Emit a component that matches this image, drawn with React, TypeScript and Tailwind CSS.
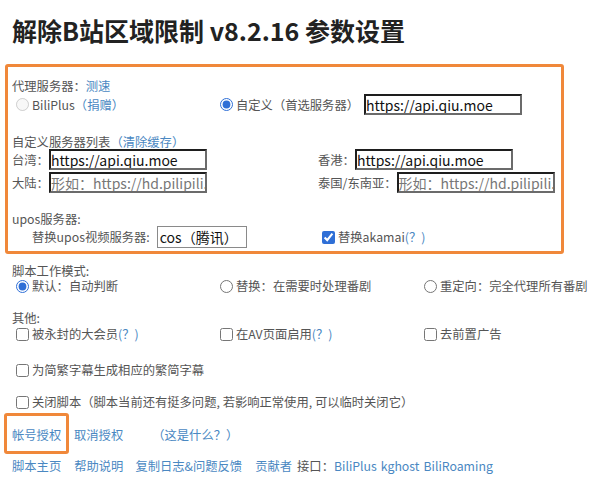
import React from 'react';

const font = { fontFamily: '"Noto Sans CJK SC", "Noto Sans", sans-serif' };

const Link: React.FC<{ children: React.ReactNode; className?: string }> = ({ children, className = '' }) => (
  <a href="#" className={`text-[#4a88c2] no-underline ${className}`}>
    {children}
  </a>
);

const Radio: React.FC<{ checked?: boolean; disabled?: boolean; name: string }> = ({ checked, disabled, name }) => (
  <input
    type="radio"
    name={name}
    defaultChecked={checked}
    disabled={disabled}
    className="m-0 ml-[4px] mr-[3px] w-[13px] h-[13px] shrink-0 accent-[#2f6fd6]"
  />
);

const Check: React.FC<{ checked?: boolean }> = ({ checked }) => (
  <input
    type="checkbox"
    defaultChecked={checked}
    className="m-0 ml-[4px] mr-[3px] w-[13px] h-[13px] shrink-0 accent-[#2f6fd6]"
  />
);

const TextBox: React.FC<{ value?: string; placeholder?: string }> = ({ value, placeholder }) => (
  <input
    type="text"
    defaultValue={value}
    placeholder={placeholder}
    className="w-[158px] h-[21px] px-0 border-2 border-t-[#1e1e1e] border-l-[#1e1e1e] border-r-[#6b6b6b] border-b-[#6b6b6b] bg-white text-[14px] leading-[17px] text-[#111] placeholder:text-[#777] outline-none"
  />
);

export default function App() {
  return (
    <div className="w-[600px] h-[486px] bg-white px-[5px] text-[12.3px] text-[#555] overflow-hidden" style={font}>
      <h1 className="pt-[14px] pl-[7px] text-[25px] leading-[32px] font-bold text-[#222]">
        解除B站区域限制 v8.2.16 参数设置
      </h1>

      <div className="mt-[18px] w-[559px] border-[3px] border-[#f0883a] rounded-[3px] pt-[12px] pb-[3px] pl-[4px]">
        <div className="leading-[15px]">
          代理服务器：<Link>测速</Link>
        </div>
        <div className="flex items-center h-[21px] leading-[14px]">
          <label className="w-[204px] flex items-center">
            <Radio name="proxy" disabled />
            BiliPlus<Link>（捐赠）</Link>
          </label>
          <label className="flex items-center">
            <Radio name="proxy" checked />
            自定义（首选服务器）
          </label>
          <div className="ml-[5px]">
            <TextBox value="https://api.qiu.moe" />
          </div>
        </div>

        <div className="mt-[20px] leading-[14px]">
          自定义服务器列表<Link>（清除缓存）</Link>
        </div>
        <div className="flex items-center h-[21px] leading-[14px]">
          <div className="w-[306px] flex items-center">
            <span>台湾：</span>
            <TextBox value="https://api.qiu.moe" />
          </div>
          <div className="flex items-center">
            <span>香港：</span>
            <TextBox value="https://api.qiu.moe" />
          </div>
        </div>
        <div className="mt-[2px] flex items-center h-[21px] leading-[14px]">
          <div className="w-[306px] flex items-center">
            <span>大陆：</span>
            <TextBox placeholder="形如：https://hd.pilipili.com" />
          </div>
          <div className="flex items-center">
            <span>泰国/东南亚：</span>
            <TextBox placeholder="形如：https://hd.pilipili.com" />
          </div>
        </div>

        <div className="mt-[19px] leading-[14px]">upos服务器:</div>
        <div className="flex items-center h-[22px] leading-[14px]">
          <div className="w-[306px] flex items-center pl-[20px]">
            <span>替换upos视频服务器:</span>
            <div className="ml-[7px] w-[90px] h-[22px] border border-[#8a8a8a] px-[2px] text-[14px] leading-[20px] text-[#111]">
              cos（腾讯）
            </div>
          </div>
          <label className="flex items-center">
            <Check checked />
            替换akamai<Link>(？)</Link>
          </label>
        </div>
      </div>

      <div className="pl-[7px]">
        <div className="mt-[11px] leading-[12px]">脚本工作模式:</div>
        <div className="mt-[1px] flex items-center h-[16px] leading-[14px]">
          <label className="w-[204px] flex items-center">
            <Radio name="mode" checked />
            默认：自动判断
          </label>
          <label className="w-[204px] flex items-center">
            <Radio name="mode" />
            替换：在需要时处理番剧
          </label>
          <label className="flex items-center">
            <Radio name="mode" />
            重定向：完全代理所有番剧
          </label>
        </div>

        <div className="mt-[17px] leading-[14px]">其他:</div>
        <div className="mt-[1px] flex items-center h-[16px] leading-[14px]">
          <label className="w-[204px] flex items-center">
            <Check />
            被永封的大会员<Link>(？)</Link>
          </label>
          <label className="w-[204px] flex items-center">
            <Check />
            在AV页面启用<Link>(？)</Link>
          </label>
          <label className="flex items-center">
            <Check />
            去前置广告
          </label>
        </div>
        <label className="mt-[20px] flex items-center h-[16px] leading-[14px]">
          <Check />
          为简繁字幕生成相应的繁简字幕
        </label>
        <label className="mt-[16px] flex items-center h-[16px] leading-[14px]">
          <Check />
          关闭脚本（脚本当前还有挺多问题, 若影响正常使用, 可以临时关闭它）
        </label>
      </div>

      <div className="mt-[3px] flex items-center h-[41px]">
        <div className="-ml-[1px] w-[65px] h-[41px] border-[3px] border-[#f0883a] rounded-[3px] flex items-center pl-[5px] pt-[4px]">
          <Link>帐号授权</Link>
        </div>
        <Link className="ml-[5px] pt-[4px]">取消授权</Link>
        <Link className="ml-[29px] pt-[4px]">（这是什么？）</Link>
      </div>

      <div className="mt-[4px] pl-[7px] flex items-center leading-[16px]">
        <Link>脚本主页</Link>
        <Link className="ml-[13px]">帮助说明</Link>
        <Link className="ml-[12px]">复制日志&amp;问题反馈</Link>
        <Link className="ml-[13px]">贡献者</Link>
        <span className="ml-[5px]">接口：</span>
        <Link>BiliPlus</Link>
        <Link className="ml-[4px]">kghost</Link>
        <Link className="ml-[4px]">BiliRoaming</Link>
      </div>
    </div>
  );
}
